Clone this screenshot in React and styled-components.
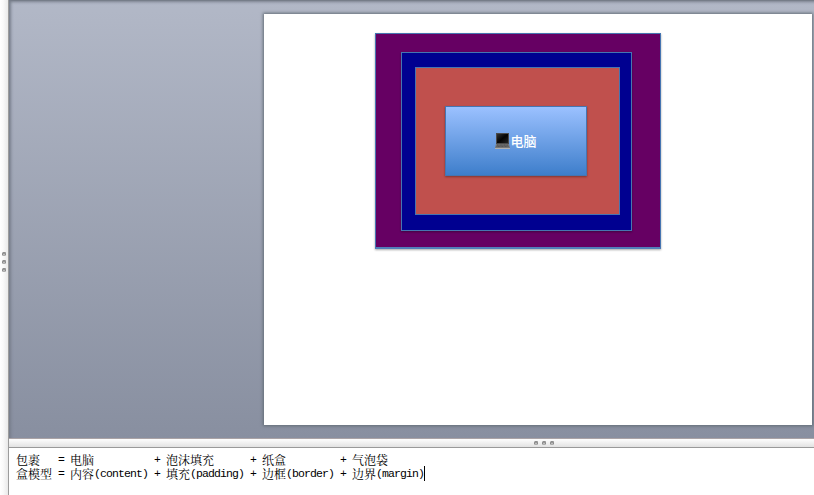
import React from "react";
import styled, { createGlobalStyle } from "styled-components";

const GlobalStyle = createGlobalStyle`
  * { box-sizing: border-box; }
  html, body { margin: 0; overflow: hidden; }
`;

const Window = styled.div`
  width: 814px;
  height: 495px;
  display: grid;
  grid-template-columns: 9px 805px;
  overflow: hidden;
  background: #fff;
`;

const SideSplitter = styled.div`
  display: flex;
  flex-direction: column;
  align-items: center;
  gap: 4px;
  padding: 252px 1px 0 0;
  background: linear-gradient(90deg, #fff 0, #fafafa 3px, #e9e9e9 8px);
  border-right: 1px solid #9c9c9c;
`;

const Grip = styled.i`
  width: 4px;
  height: 4px;
  border-radius: 1.5px;
  background: linear-gradient(#858585, #cfcfcf);
  border: 1px solid #8b8b8b;
  border-bottom-color: #adadad;
`;

const Main = styled.main`
  display: grid;
  grid-template-rows: 438px 10px 47px;
  min-width: 0;
`;

const Canvas = styled.section`
  padding: 14px 2px 13px 255px;
  overflow: hidden;
  background: linear-gradient(#b2b8c7, #888fa0);
  box-shadow: inset 3px 3px 3px -1px #777e8b, inset 0 1px 0 #747b84;
`;

const Slide = styled.div`
  width: 548px;
  height: 411px;
  padding: 19px 0 0 111px;
  background: #fff;
  box-shadow: 0 0 3px 1px #636c75;
`;

const Box = styled.div`
  border: 1px solid #4675b1;
  box-shadow: 0 1px 2px rgba(0, 0, 0, 0.35);
`;

const Margin = styled(Box)`
  width: 286px;
  height: 216px;
  padding: 18px 0 0 25px;
  background: #660063;
  border-bottom: 2px solid #527fba;
`;

const Border = styled(Box)`
  width: 231px;
  height: 179px;
  padding: 14px 0 0 13px;
  background: #000090;
`;

const Padding = styled(Box)`
  width: 205px;
  height: 148px;
  padding: 38px 0 0 29px;
  background: #c0504d;
  box-shadow: none;
`;

const Content = styled(Box)`
  width: 142px;
  height: 70px;
  display: flex;
  align-items: center;
  justify-content: center;
  background: linear-gradient(#9bc1ff, #3e7ecb);
  color: #fff;
  font: 500 13px/18px "Noto Sans CJK SC", sans-serif;
`;

const Laptop = styled.svg`
  width: 15px;
  height: 17px;
  flex: none;
`;

const Divider = styled.div`
  display: flex;
  align-items: center;
  gap: 4px;
  padding-left: 525px;
  background: linear-gradient(#fdfdfd, #e2e2e2);
  border-top: 1px solid #aaa3a6;
  border-bottom: 1px solid #999;
`;

const Notes = styled.section`
  padding: 5px 0 0 7px;
  background: #fff;
  color: #000;
`;

const Line = styled.div`
  display: grid;
  grid-template-columns: 42px 12px 84px 12px 84px 12px 78px 12px 73px;
  height: 14px;
  white-space: nowrap;
  font: 12px/14px "Noto Serif CJK SC", "Noto Sans CJK SC", serif;
`;

const Cell = styled.span`
  display: flex;
  height: 14px;
`;

const Latin = styled.span`
  font: 11.5px/14px "Liberation Mono", monospace;
  letter-spacing: -0.901px;
`;

const Caret = styled.i`
  width: 1px;
  height: 15px;
  margin-top: -1px;
  background: #000;
`;

const lines = [
  {
    name: "包裹",
    terms: [["电脑"], ["泡沫填充"], ["纸盒"], ["气泡袋"]],
  },
  {
    name: "盒模型",
    terms: [["内容", "(content)"], ["填充", "(padding)"], ["边框", "(border)"], ["边界", "(margin)"]],
    active: true,
  },
];

function NoteLine({ name, terms, active }) {
  return (
    <Line>
      <Cell>{name}</Cell>
      {terms.map(([word, term], i) => (
        <React.Fragment key={word}>
          <Cell><Latin>{i === 0 ? "=" : "+"}</Latin></Cell>
          <Cell>
            {word}
            {term && <Latin>{term}</Latin>}
            {active && i === terms.length - 1 && <Caret />}
          </Cell>
        </React.Fragment>
      ))}
    </Line>
  );
}

const Grips = () => <><Grip /><Grip /><Grip /></>;

const LaptopIcon = () => (
  <Laptop viewBox="0 0 15 17">
    <defs>
      <linearGradient id="screen" x2="1" y2="1">
        <stop stopColor="#333" />
        <stop offset=".5" stopColor="#030303" />
        <stop offset="1" stopColor="#242424" />
      </linearGradient>
    </defs>
    <path d="M1 0h13v11H1z" fill="#4a4a4a" />
    <path d="M2 1h11v9H2z" fill="url(#screen)" />
    <path d="M1 11h13l1 4H0z" fill="#777" />
    <path d="M2 12h11M1.5 13.3h12" stroke="#393939" strokeWidth=".7" strokeDasharray="1 .4" />
    <path d="M0 15h15v1H0z" fill="#b0b0b0" />
  </Laptop>
);

export default function App() {
  return (
    <>
      <GlobalStyle />
      <Window>
        <SideSplitter><Grips /></SideSplitter>
        <Main>
          <Canvas>
            <Slide>
              <Margin>
                <Border>
                  <Padding>
                    <Content><LaptopIcon />电脑</Content>
                  </Padding>
                </Border>
              </Margin>
            </Slide>
          </Canvas>
          <Divider><Grips /></Divider>
          <Notes>
            {lines.map((line) => <NoteLine key={line.name} {...line} />)}
          </Notes>
        </Main>
      </Window>
    </>
  );
}
